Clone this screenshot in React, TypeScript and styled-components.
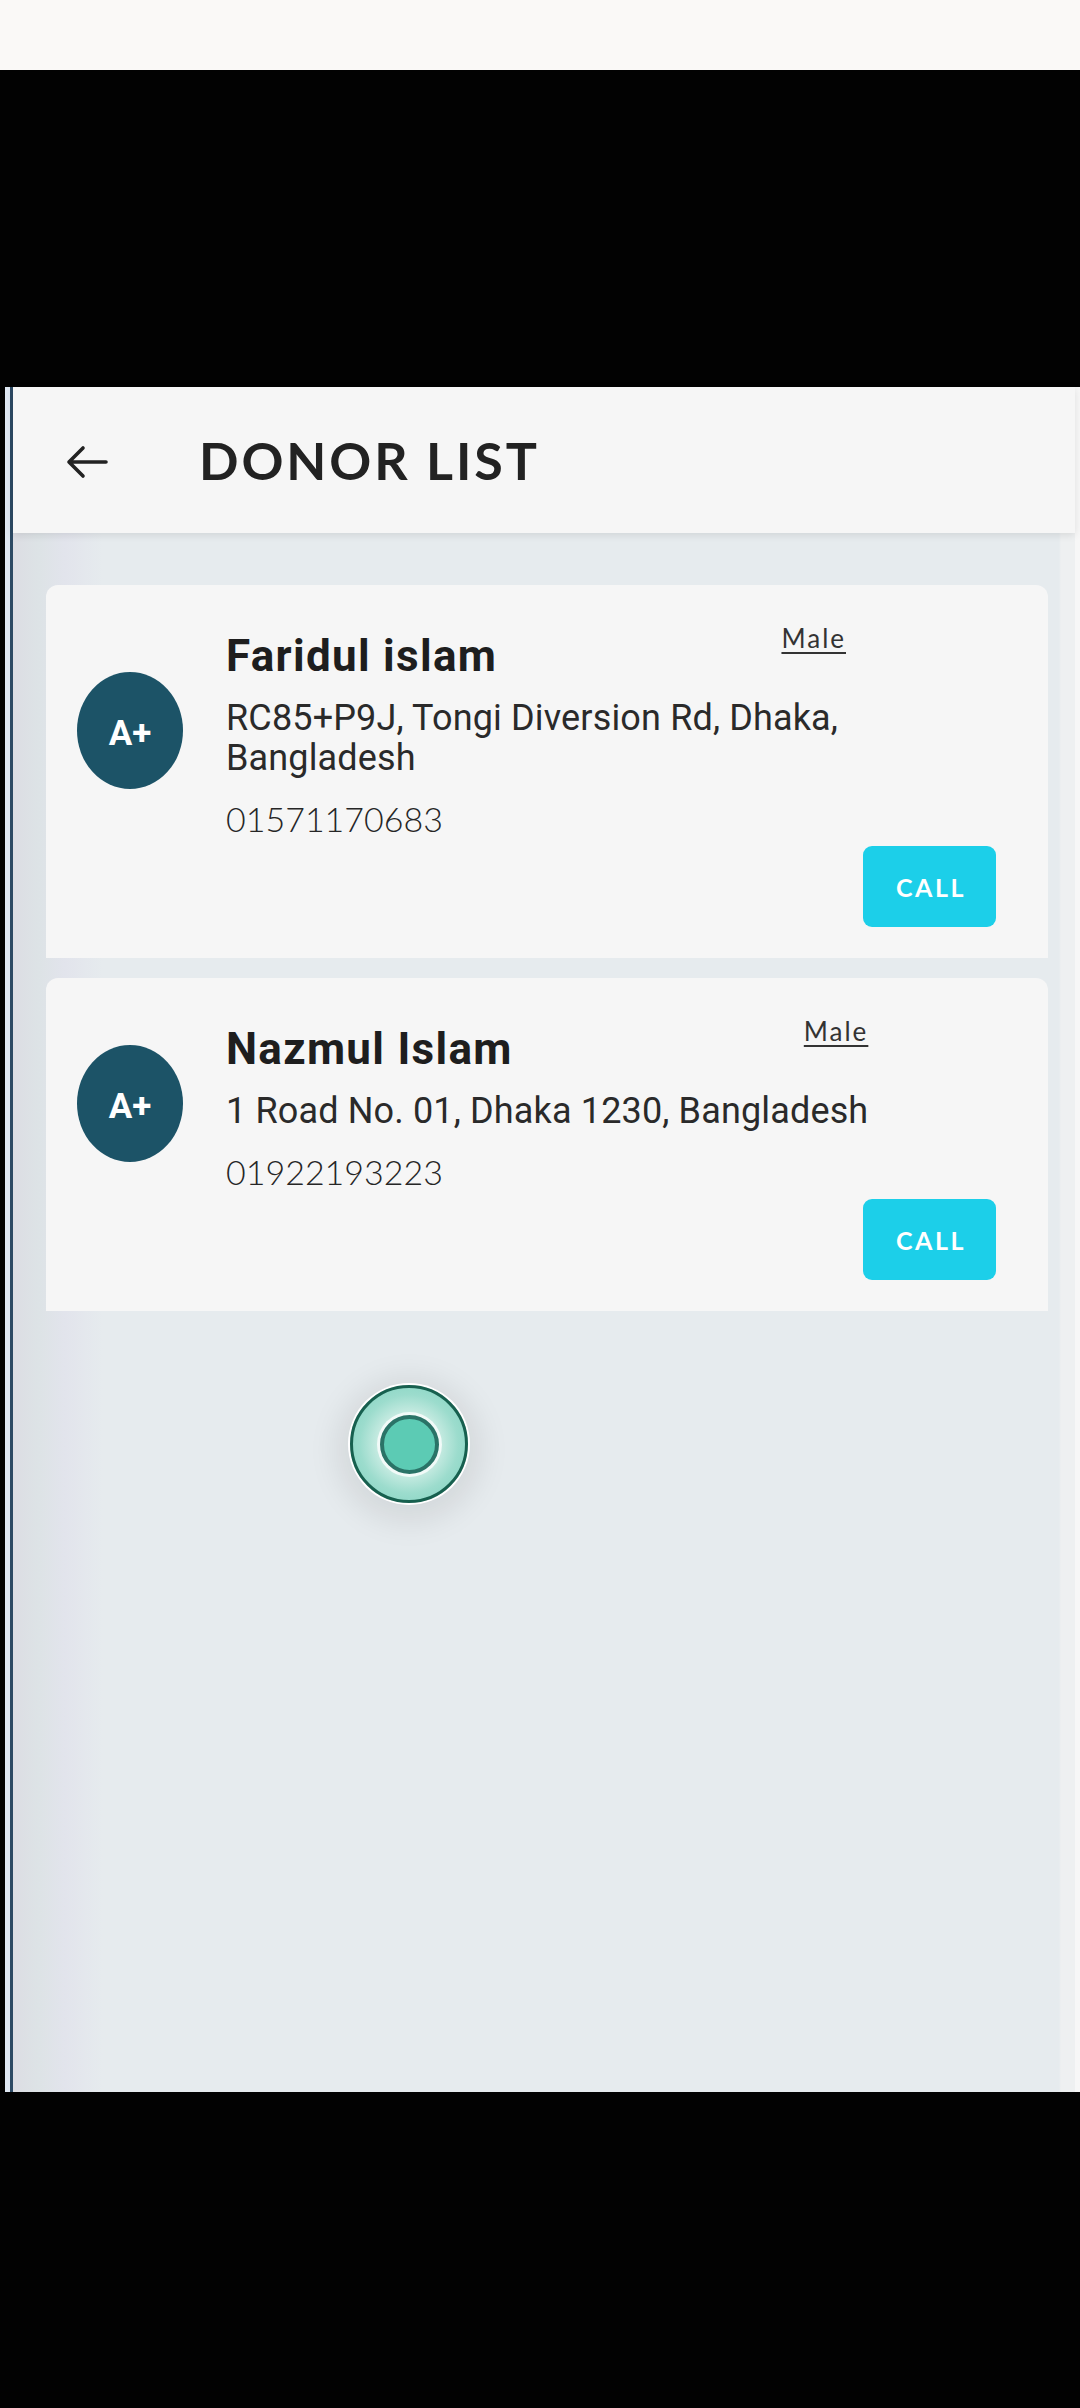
import React from "react";
import styled, { createGlobalStyle } from "styled-components";

const GlobalStyle = createGlobalStyle`
  html, body {
    margin: 0;
    padding: 0;
    background: #020202;
  }
  * {
    box-sizing: border-box;
  }
`;

type Donor = {
  name: string;
  gender: string;
  group: string;
  address: string;
  phone: string;
};

const donors: Donor[] = [
  {
    name: "Faridul islam",
    gender: "Male",
    group: "A+",
    address: "RC85+P9J, Tongi Diversion Rd, Dhaka,\nBangladesh",
    phone: "01571170683",
  },
  {
    name: "Nazmul Islam",
    gender: "Male",
    group: "A+",
    address: "1 Road No. 01, Dhaka 1230, Bangladesh",
    phone: "01922193223",
  },
];

const BackArrow = () => (
  <svg width="44" height="36" viewBox="0 0 44 36" fill="none">
    <path
      d="M41 18H4M18 4L4 18L18 32"
      stroke="#222"
      strokeWidth="3.6"
      strokeLinecap="round"
      strokeLinejoin="round"
    />
  </svg>
);

const DonorCard = ({ donor }: { donor: Donor }) => (
  <Card>
    <CardMain>
      <BloodBadge>{donor.group}</BloodBadge>
      <Info>
        <NameRow>
          <Name>{donor.name}</Name>
          <Gender>{donor.gender}</Gender>
        </NameRow>
        <Address>{donor.address}</Address>
        <Phone>{donor.phone}</Phone>
      </Info>
    </CardMain>
    <Actions>
      <CallButton>CALL</CallButton>
    </Actions>
  </Card>
);

export default function App() {
  return (
    <>
      <GlobalStyle />
      <StatusStrip />
      <TopGap />
      <Frame>
        <FrameEdge />
        <Screen>
          <Header>
            <BackButton>
              <BackArrow />
            </BackButton>
            <Title>DONOR LIST</Title>
          </Header>
          <Content>
            {donors.map((d) => (
              <DonorCard key={d.phone} donor={d} />
            ))}
            <TouchDot>
              <TouchCore />
            </TouchDot>
          </Content>
        </Screen>
        <FrameRight />
      </Frame>
    </>
  );
}

const StatusStrip = styled.div`
  height: 70px;
  background: #faf9f7;
`;

const TopGap = styled.div`
  height: 317px;
  background: #020202;
`;

const Frame = styled.div`
  display: flex;
  height: 1705px;
  background: #020202;
`;

const FrameEdge = styled.div`
  margin-left: 5px;
  width: 8px;
  background: linear-gradient(90deg, #dfe8f3 0, #dfe8f3 5px, #2d4a64 5px, #2d4a64 8px);
`;

const FrameRight = styled.div`
  width: 5px;
  background: #f7f7f7;
`;

const Screen = styled.div`
  flex: 1;
  display: flex;
  flex-direction: column;
  background: #e6ebee;
`;

const Header = styled.div`
  height: 146px;
  display: flex;
  align-items: center;
  padding-left: 52px;
  gap: 90px;
  background: #f6f6f6;
  box-shadow: 0 2px 8px rgba(0, 0, 0, 0.1);
  position: relative;
  z-index: 1;
`;

const BackButton = styled.div`
  display: flex;
  align-items: center;
  margin-top: 4px;
`;

const Title = styled.h1`
  margin: 0;
  font-family: Lato, "Liberation Sans", sans-serif;
  font-weight: 700;
  font-size: 52px;
  letter-spacing: 2.9px;
  color: #222;
`;

const Content = styled.div`
  position: relative;
  flex: 1;
  display: flex;
  flex-direction: column;
  gap: 20px;
  padding: 52px 27px 0 33px;
  background: linear-gradient(
    90deg,
    #dcdde3 0,
    #dde3e6 26px,
    #e2e4ec 52px,
    #e6ebee 90px,
    #e6ebee calc(100% - 16px),
    #eef0f1 calc(100% - 14px)
  );
`;

const Card = styled.div`
  display: flex;
  flex-direction: column;
  padding: 37px 52px 31px 31px;
  background: #f6f6f6;
  border-radius: 12px 12px 0 0;
`;

const CardMain = styled.div`
  display: flex;
  align-items: center;
  gap: 43px;
`;

const BloodBadge = styled.div`
  flex: none;
  width: 106px;
  height: 117px;
  padding-top: 6px;
  border-radius: 50%;
  background: #1c5367;
  color: #fff;
  display: flex;
  align-items: center;
  justify-content: center;
  font-family: Roboto, "Liberation Sans", sans-serif;
  font-weight: 700;
  font-size: 35px;
`;

const Info = styled.div`
  display: flex;
  flex-direction: column;
  min-width: 620px;
`;

const NameRow = styled.div`
  display: flex;
  justify-content: space-between;
  align-items: flex-start;
`;

const Name = styled.div`
  margin-top: 8px;
  font-family: Roboto, "Liberation Sans", sans-serif;
  font-weight: 700;
  font-size: 44px;
  line-height: 52px;
  letter-spacing: 1.3px;
  color: #1e1e1e;
`;

const Gender = styled.div`
  font-family: Lato, "Liberation Sans", sans-serif;
  font-size: 26px;
  line-height: 32px;
  letter-spacing: 2px;
  color: #333;
  text-decoration: underline;
  text-decoration-thickness: 2px;
  text-underline-offset: 4px;
`;

const Address = styled.div`
  margin-top: 16px;
  font-family: Roboto, "Liberation Sans", sans-serif;
  font-size: 36px;
  line-height: 40px;
  letter-spacing: 0.15px;
  color: #2a2a2a;
  white-space: pre-line;
`;

const Phone = styled.div`
  margin-top: 21px;
  font-family: Lato, "Liberation Sans", sans-serif;
  font-weight: 300;
  font-size: 34px;
  line-height: 40px;
  color: #262626;
`;

const Actions = styled.div`
  display: flex;
  justify-content: flex-end;
  margin-top: 7px;
`;

const CallButton = styled.button`
  width: 133px;
  height: 81px;
  border: none;
  border-radius: 9px;
  background: #1ccfe9;
  color: #fff;
  font-family: Lato, "Liberation Sans", sans-serif;
  font-weight: 700;
  font-size: 25px;
  letter-spacing: 2.5px;
  padding: 0 0 0 3px;
`;

const TouchDot = styled.div`
  position: absolute;
  left: 337px;
  top: 852px;
  width: 118px;
  height: 118px;
  border-radius: 50%;
  border: 3px solid #17604f;
  background: radial-gradient(circle, #d8f1ea 30%, #9cdccd 62%, #7ad0bd 100%);
  box-shadow: 0 0 0 2px #ffffff, 0 6px 30px 14px rgba(0, 0, 0, 0.08);
  display: flex;
  align-items: center;
  justify-content: center;
`;

const TouchCore = styled.div`
  width: 59px;
  height: 59px;
  border-radius: 50%;
  border: 4px solid #2a7367;
  background: #5ccbb4;
  box-shadow: 0 0 0 3px rgba(255, 255, 255, 0.75);
`;
